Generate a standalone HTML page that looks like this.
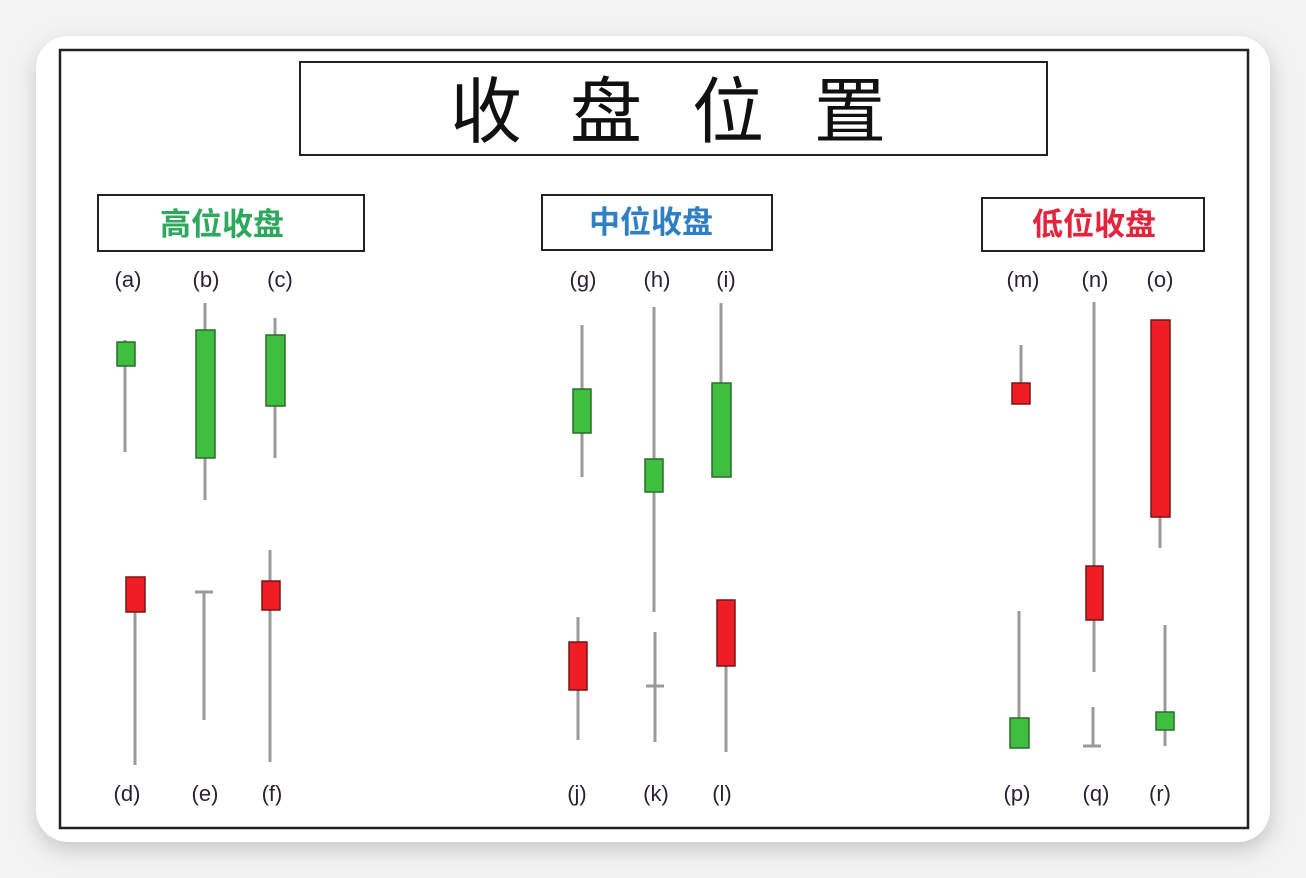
<!DOCTYPE html>
<html><head><meta charset="utf-8"><style>
html,body{margin:0;padding:0;width:1306px;height:878px;overflow:hidden;background:#f2f2f2;}
svg{display:block}
.cj{font-family:"Liberation Sans","Noto Sans CJK SC",sans-serif;}
.lb{font-family:"Liberation Sans",sans-serif;font-size:22px;fill:#2a2233;text-anchor:middle;}
</style></head><body>
<svg width="1306" height="878" viewBox="0 0 1306 878" xmlns="http://www.w3.org/2000/svg">
<defs>
<filter id="sh" x="-5%" y="-5%" width="110%" height="115%"><feGaussianBlur stdDeviation="10"/></filter>
</defs>
<rect x="0" y="0" width="1306" height="878" fill="#f3f3f3"/>
<rect x="36" y="44" width="1236" height="806" rx="32" fill="#c8c8c8" filter="url(#sh)"/>
<rect x="36" y="36" width="1234" height="806" rx="32" fill="#fff"/>
<rect x="60" y="50" width="1188" height="778" fill="none" stroke="#222" stroke-width="2.5"/>
<rect x="300" y="62" width="747" height="93" fill="#fff" stroke="#222" stroke-width="2"/>
<g class="cj" font-size="72" fill="#111" text-anchor="middle">
<text x="486" y="137">收</text><text x="606" y="137">盘</text><text x="728" y="137">位</text><text x="850" y="137">置</text>
</g>
<rect x="98" y="195" width="266" height="56" fill="#fff" stroke="#222" stroke-width="2"/>
<rect x="542" y="195" width="230" height="55" fill="#fff" stroke="#222" stroke-width="2"/>
<rect x="982" y="198" width="222" height="53" fill="#fff" stroke="#222" stroke-width="2"/>
<g class="cj" font-size="31" font-weight="bold" text-anchor="middle">
<text x="222" y="235" fill="#2ea85c">高位收盘</text>
<text x="651" y="233" fill="#2f7fc4">中位收盘</text>
<text x="1094" y="235" fill="#e2243c">低位收盘</text>
</g>
<g class="lb">
<text x="128" y="287">(a)</text><text x="206" y="287">(b)</text><text x="280" y="287">(c)</text>
<text x="583" y="287">(g)</text><text x="657" y="287">(h)</text><text x="726" y="287">(i)</text>
<text x="1023" y="287">(m)</text><text x="1095" y="287">(n)</text><text x="1160" y="287">(o)</text>
<text x="127" y="801">(d)</text><text x="205" y="801">(e)</text><text x="272" y="801">(f)</text>
<text x="577" y="801">(j)</text><text x="656" y="801">(k)</text><text x="722" y="801">(l)</text>
<text x="1017" y="801">(p)</text><text x="1096" y="801">(q)</text><text x="1160" y="801">(r)</text>
</g>
<g stroke="#9a9a9a" stroke-width="3">
<line x1="125" y1="340" x2="125" y2="452"/>
<line x1="205" y1="303" x2="205" y2="500"/>
<line x1="275" y1="318" x2="275" y2="458"/>
<line x1="135" y1="577" x2="135" y2="765"/>
<line x1="204" y1="592" x2="204" y2="720"/><line x1="195" y1="592" x2="213" y2="592"/>
<line x1="270" y1="550" x2="270" y2="762"/>
<line x1="582" y1="325" x2="582" y2="477"/>
<line x1="654" y1="307" x2="654" y2="612"/>
<line x1="721" y1="303" x2="721" y2="477"/>
<line x1="578" y1="617" x2="578" y2="740"/>
<line x1="655" y1="632" x2="655" y2="742"/><line x1="646" y1="686" x2="664" y2="686"/>
<line x1="726" y1="600" x2="726" y2="752"/>
<line x1="1021" y1="345" x2="1021" y2="383"/>
<line x1="1094" y1="302" x2="1094" y2="672"/>
<line x1="1160" y1="320" x2="1160" y2="548"/>
<line x1="1019" y1="611" x2="1019" y2="748"/>
<line x1="1093" y1="707" x2="1093" y2="746"/><line x1="1083" y1="746" x2="1101" y2="746"/>
<line x1="1165" y1="625" x2="1165" y2="746"/>
</g>
<g fill="#3fbf3f" stroke="#2b6b2b" stroke-width="1.5">
<rect x="117" y="342" width="18" height="24"/>
<rect x="196" y="330" width="19" height="128"/>
<rect x="266" y="335" width="19" height="71"/>
<rect x="573" y="389" width="18" height="44"/>
<rect x="645" y="459" width="18" height="33"/>
<rect x="712" y="383" width="19" height="94"/>
<rect x="1010" y="718" width="19" height="30"/>
<rect x="1156" y="712" width="18" height="18"/>
</g>
<g fill="#ee1c24" stroke="#7a1515" stroke-width="1.5">
<rect x="126" y="577" width="19" height="35"/>
<rect x="262" y="581" width="18" height="29"/>
<rect x="569" y="642" width="18" height="48"/>
<rect x="717" y="600" width="18" height="66"/>
<rect x="1012" y="383" width="18" height="21"/>
<rect x="1086" y="566" width="17" height="54"/>
<rect x="1151" y="320" width="19" height="197"/>
</g>
</svg>
</body></html>
